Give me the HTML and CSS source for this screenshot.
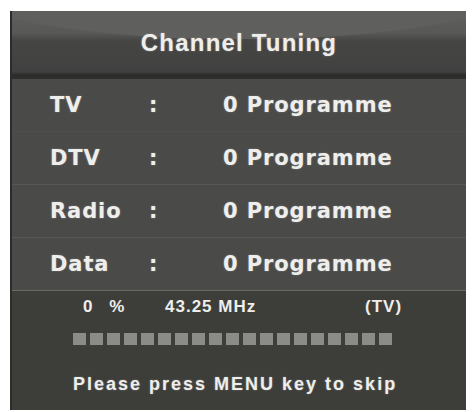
FILE: index.html
```html
<!DOCTYPE html>
<html>
<head>
<meta charset="utf-8">
<link rel="stylesheet" href="styles.css">
</head>
<body>
<div class="panel">
  <div class="header">
    <div class="gloss"></div>
    <div class="title">Channel Tuning</div>
  </div>
  <div class="rows">
    <div class="row"><span class="label">TV</span><span class="colon">:</span><span class="value">0 Programme</span></div>
    <div class="row"><span class="label">DTV</span><span class="colon">:</span><span class="value">0 Programme</span></div>
    <div class="row"><span class="label">Radio</span><span class="colon">:</span><span class="value">0 Programme</span></div>
    <div class="row"><span class="label">Data</span><span class="colon">:</span><span class="value">0 Programme</span></div>
  </div>
  <div class="status">
    <div class="info">
      <span class="pct">0 <span class="sign">%</span></span>
      <span class="freq">43.25 MHz</span>
      <span class="mode">(TV)</span>
    </div>
    <div class="bar">
      <i></i><i></i><i></i><i></i><i></i><i></i><i></i><i></i><i></i><i></i>
      <i></i><i></i><i></i><i></i><i></i><i></i><i></i><i></i><i></i>
    </div>
    <div class="hint">Please press MENU key to skip</div>
  </div>
</div>
</body>
</html>
```
FILE: styles.css
```css
html, body {
  margin: 0;
  padding: 0;
  background: #ffffff;
}
body {
  font-family: "Liberation Sans", Arial, sans-serif;
  font-weight: bold;
  color: #eeeeec;
}
.panel {
  margin: 11px 0 0 10px;
  width: 456px;
  height: 399px;
  background: #4a4a48;
  border-left: 2px solid #2c2c2a;
  box-sizing: border-box;
  display: flex;
  flex-direction: column;
}
.header {
  position: relative;
  height: 68px;
  background: linear-gradient(#5e5e5c 0px, #585856 22px, #454543 30px, #414141 60px, #3a3a38 62px, #2b2b29 64px, #2f2f2d 68px);
  display: flex;
  align-items: center;
  justify-content: center;
  overflow: hidden;
}
.gloss {
  position: absolute;
  left: -40px;
  right: -40px;
  top: -60px;
  height: 88px;
  border-radius: 50%;
  background: #5f5f5d;
}
.title {
  position: relative;
  font-size: 24px;
  letter-spacing: 1.2px;
  margin-top: -4px;
  text-shadow: 0 0 2px rgba(255,255,255,0.35);
}
.rows {
  height: 211px;
  display: flex;
  flex-direction: column;
}
.row {
  flex: 1;
  display: grid;
  grid-template-columns: 99px 74px auto;
  align-items: center;
  padding-left: 38px;
  font-family: "DejaVu Sans", "Liberation Sans", sans-serif;
  font-size: 21px;
  letter-spacing: 0.9px;
  border-top: 1px solid #575755;
  text-shadow: 0 0 2px rgba(255,255,255,0.3);
}
.row:first-child {
  border-top: none;
}
.row:nth-child(2) {
  border-top-color: #4e4e4c;
}
.status {
  flex: 1;
  background: #3d3e3a;
  border-top: 1px solid #6a6a66;
  display: flex;
  flex-direction: column;
}
.info {
  display: flex;
  height: 32px;
  align-items: center;
  font-size: 17px;
  letter-spacing: 1px;
  padding-left: 71px;
}
.pct {
  width: 82px;
}
.sign {
  margin-left: 10px;
}
.freq {
  width: 200px;
}
.bar {
  display: flex;
  gap: 3.8px;
  padding-left: 61px;
  margin-top: 10px;
  height: 12px;
}
.bar i {
  width: 13.2px;
  height: 12px;
  background: #8b8c87;
  filter: blur(0.4px);
}
.hint {
  margin-top: 29px;
  padding-left: 61px;
  font-size: 18px;
  letter-spacing: 2px;
  text-shadow: 0 0 2px rgba(255,255,255,0.3);
}
```
